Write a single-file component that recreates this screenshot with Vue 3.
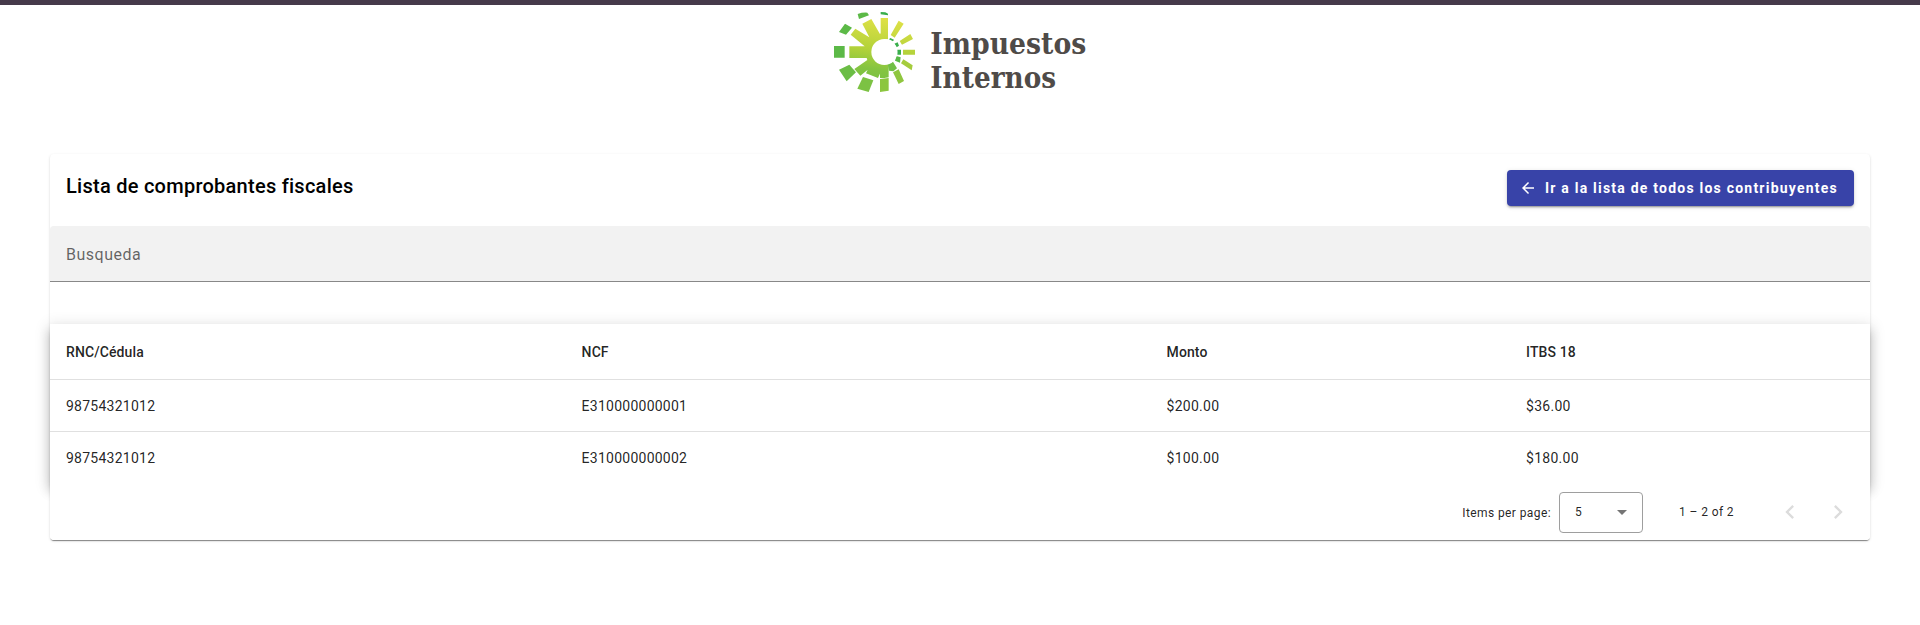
<script setup>
const columns = ['RNC/Cédula', 'NCF', 'Monto', 'ITBS 18']
const rows = [
  ['98754321012', 'E310000000001', '$200.00', '$36.00'],
  ['98754321012', 'E310000000002', '$100.00', '$180.00'],
]
</script>

<template>
  <div class="page">
    <header class="brand">
      <svg class="logo" width="280" height="95" viewBox="0 5 280 95">
        <defs>
          <linearGradient id="sun" gradientUnits="userSpaceOnUse" x1="215" y1="50" x2="190" y2="240">
            <stop offset="0" stop-color="#e2e247" />
            <stop offset="0.55" stop-color="#b3d23a" />
            <stop offset="0.85" stop-color="#84c441" />
            <stop offset="1" stop-color="#7cc242" />
          </linearGradient>
        </defs>
        <g transform="scale(0.33333)">
          <g fill="url(#sun)">
            <path d="M182 54H204V118H182ZM127 71 154 57 190 120 160 135ZM92 104 106 86 165 122 145 148ZM88 139 148 139V174H88ZM103 207 142 180 172 186 121 227ZM138 220 158 178 193 192 174 234ZM180 190H206V232L193 234H180Z" />
            <path d="M193 100A56 56 0 1 0 193 212Z" />
            <path d="M212 105 236 62 251 71 224 113ZM239 123 271 102 279 117 246 134ZM249 149H285V164H249Z" />
          </g>
          <path fill="#a5cc3d" d="M243 190 250 178 278 196 275 211Z" />
          <path fill="#8fc63f" d="M219 217 236 208 252 243 236 252Z" />
          <g fill="#5cb947">
            <path d="M113 42Q127 37 142 38L147 46 117 57ZM75 71 96 83 78 104 57 96ZM42 138H74V173H42Z" />
            <path fill="#39ae4c" d="M182 36 196 37 204 41V46L182 43ZM207 118 211 114 222 119 219 124ZM223 131 233 127 237 137 230 142ZM232 149H243V164H232Z" />
            <path fill="#58b947" d="M229 168 242 172 240 188 225 182Z" />
            <path fill="#71bf45" d="M203 192 219 185 231 205 220 214 207 212Z" />
          </g>
          <path fill="#6bbd45" d="M57 209 88 194 108 217 80 244Z" />
          <path fill="#7cc243" d="M129 231 160 241 146 276 112 266Z" />
          <path fill="#8cc63f" d="M180 237 206 234V272L180 276Z" />
          <circle cx="193" cy="156" r="39" fill="#fff" />
        </g>
        <g class="wordmark">
          <text x="110.3" y="54.4" textLength="156" lengthAdjust="spacingAndGlyphs">Impuestos</text>
          <text x="110.3" y="88" textLength="125.7" lengthAdjust="spacingAndGlyphs">Internos</text>
        </g>
      </svg>
    </header>

    <main class="card">
      <div class="card-head">
        <h1>Lista de comprobantes fiscales</h1>
        <button class="back" type="button">
          <svg width="18" height="18" viewBox="0 0 24 24"><path fill="currentColor" d="M20 11H7.83l5.59-5.59L12 4l-8 8 8 8 1.41-1.41L7.83 13H20v-2z" /></svg>
          <span>Ir a la lista de todos los contribuyentes</span>
        </button>
      </div>

      <div class="search">Busqueda</div>

      <table>
        <colgroup>
          <col class="c-rnc" /><col class="c-ncf" /><col class="c-amount" /><col />
        </colgroup>
        <thead>
          <tr><th v-for="c in columns" :key="c">{{ c }}</th></tr>
        </thead>
        <tbody>
          <tr v-for="row in rows" :key="row[1]">
            <td v-for="(cell, i) in row" :key="i">{{ cell }}</td>
          </tr>
        </tbody>
      </table>

      <div class="paginator">
        <span class="label">Items per page:</span>
        <div class="select">
          <span>5</span>
          <svg width="10" height="5" viewBox="0 0 10 5"><path d="M0 0H10L5 5Z" fill="#757575" /></svg>
        </div>
        <span class="range">1 – 2 of 2</span>
        <svg class="nav" width="28" height="28" viewBox="0 0 24 24"><path d="M15.41 7.41L14 6l-6 6 6 6 1.41-1.41L10.83 12z" /></svg>
        <svg class="nav next" width="28" height="28" viewBox="0 0 24 24"><path d="M10 6L8.59 7.41 13.17 12l-4.58 4.59L10 18l6-6z" /></svg>
      </div>
    </main>
  </div>
</template>

<style>
body {
  background: #fff;
}
</style>

<style scoped>
.page {
  box-sizing: border-box;
  height: 625px;
  border-top: 5px solid #463a4a;
  background: #fff;
  font-family: Roboto, sans-serif;
  color: rgba(0, 0, 0, 0.87);
}
.brand {
  height: 149px;
  display: flex;
  justify-content: center;
}
.logo {
  display: block;
}
.wordmark {
  font-family: "DejaVu Serif", serif;
  font-weight: 700;
  font-size: 30px;
  fill: #4f4b48;
}
.card {
  margin: 0 50px;
  height: 386px;
  border-radius: 4px;
  background: #fff;
  box-shadow: 0 2px 1px -1px rgba(0, 0, 0, 0.34), 0 1px 1px rgba(0, 0, 0, 0.14), 0 1px 3px rgba(0, 0, 0, 0.12);
}
.card-head {
  height: 72px;
  box-sizing: border-box;
  padding: 16px 16px 0;
  display: flex;
  justify-content: space-between;
  align-items: flex-start;
}
h1 {
  margin: 0;
  font-size: 20px;
  line-height: 32px;
  font-weight: 500;
  letter-spacing: 0.26px;
  color: #000;
}
.back {
  width: 347px;
  height: 36px;
  padding: 0 0 0 12px;
  border: 0;
  border-radius: 4px;
  display: flex;
  align-items: center;
  gap: 8px;
  white-space: nowrap;
  background: #3843a8;
  color: #fff;
  font: 700 14px/36px Roboto, sans-serif;
  letter-spacing: 1.22px;
  box-shadow: 0 3px 1px -2px rgba(0, 0, 0, 0.2), 0 2px 2px rgba(0, 0, 0, 0.14), 0 1px 5px rgba(0, 0, 0, 0.12);
}
.search {
  box-sizing: border-box;
  height: 56px;
  margin-bottom: 42px;
  padding-left: 16px;
  border-bottom: 1px solid #888;
  border-radius: 4px 4px 0 0;
  background: #f2f2f2;
  color: rgba(0, 0, 0, 0.6);
  font-size: 16px;
  line-height: 57px;
  letter-spacing: 0.5px;
}
table {
  width: 100%;
  table-layout: fixed;
  border-collapse: separate;
  border-spacing: 0;
  background: #fff;
  font-size: 14px;
  box-shadow: 0 5px 5px -3px rgba(0, 0, 0, 0.2), 0 8px 10px 1px rgba(0, 0, 0, 0.14), 0 3px 14px 2px rgba(0, 0, 0, 0.12);
}
.c-rnc { width: 515.6px; }
.c-ncf { width: 585px; }
.c-amount { width: 359.5px; }
th,
td {
  box-sizing: border-box;
  padding: 0 16px;
  text-align: left;
  border-bottom: 1px solid #e0e0e0;
}
th {
  height: 56px;
  font-weight: 500;
  letter-spacing: 0.1px;
}
td {
  height: 52px;
  letter-spacing: 0.25px;
}
tbody tr:last-child td {
  border-bottom: 0;
}
.paginator {
  position: relative;
  box-sizing: border-box;
  height: 56px;
  padding-right: 18px;
  display: flex;
  justify-content: flex-end;
  align-items: center;
  border-radius: 0 0 4px 4px;
  background: #fff;
  font-size: 12px;
  letter-spacing: 0.4px;
}
.label {
  margin-right: 8px;
  padding-top: 1px;
}
.select {
  box-sizing: border-box;
  width: 84px;
  height: 41px;
  padding: 0 15px;
  margin-right: 36px;
  border: 1px solid #9e9e9e;
  border-radius: 4px;
  display: flex;
  align-items: center;
  justify-content: space-between;
}
.range {
  margin-right: 42px;
  padding-bottom: 1px;
}
.nav {
  fill: #dcdcdc;
}
.next {
  margin-left: 20px;
}
</style>
